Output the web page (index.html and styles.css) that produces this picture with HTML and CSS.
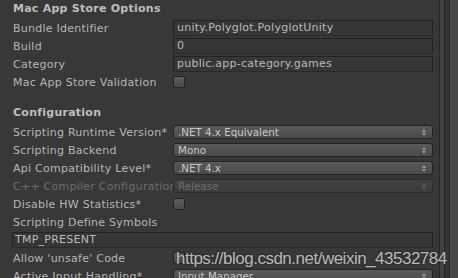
FILE: index.html
```html
<!DOCTYPE html>
<html lang="en">
<head>
  <meta charset="UTF-8">
  <title>Player Settings</title>
  <link rel="stylesheet" href="styles.css">
</head>
<body>
  <div class="inspector">
    <div class="content">
      <div class="section-title">Mac App Store Options</div>
      <div class="row">
        <label class="label">Bundle Identifier</label>
        <div class="field">unity.Polyglot.PolyglotUnity</div>
      </div>
      <div class="row">
        <label class="label">Build</label>
        <div class="field">0</div>
      </div>
      <div class="row">
        <label class="label">Category</label>
        <div class="field">public.app-category.games</div>
      </div>
      <div class="row">
        <label class="label">Mac App Store Validation</label>
        <div class="toggle"></div>
      </div>

      <div class="section-title section-gap">Configuration</div>
      <div class="row">
        <label class="label">Scripting Runtime Version*</label>
        <div class="popup">.NET 4.x Equivalent<span class="arrows"></span></div>
      </div>
      <div class="row">
        <label class="label">Scripting Backend</label>
        <div class="popup">Mono<span class="arrows"></span></div>
      </div>
      <div class="row">
        <label class="label">Api Compatibility Level*</label>
        <div class="popup">.NET 4.x<span class="arrows"></span></div>
      </div>
      <div class="row disabled">
        <label class="label">C++ Compiler Configuration</label>
        <div class="popup">Release<span class="arrows"></span></div>
      </div>
      <div class="row">
        <label class="label">Disable HW Statistics*</label>
        <div class="toggle"></div>
      </div>
      <div class="row">
        <label class="label">Scripting Define Symbols</label>
      </div>
      <div class="row">
        <div class="field wide">TMP_PRESENT</div>
      </div>
      <div class="row">
        <label class="label">Allow 'unsafe' Code</label>
        <div class="toggle"></div>
      </div>
      <div class="row">
        <label class="label">Active Input Handling*</label>
        <div class="popup">Input Manager<span class="arrows"></span></div>
      </div>
    </div>
    <div class="scrollbar">
      <div class="track-a"></div>
      <div class="track-b"></div>
      <div class="track-c"></div>
    </div>
  </div>
  <div class="watermark">https://blog.csdn.net/weixin_43532784</div>
</body>
</html>
```

FILE: styles.css
```css
body {
  margin: 0;
  background-color: #383838;
  font-family: "DejaVu Sans", Verdana, sans-serif;
  font-size: 11px;
  letter-spacing: 0.25px;
  color: #b6b6b6;
  overflow: hidden;
}
.inspector {
  display: flex;
  height: 278px;
}
.content {
  flex: 1;
  padding: 0 6px 0 13px;
}
.section-title {
  height: 17px;
  line-height: 17px;
  font-weight: bold;
  color: #bebebe;
  margin-bottom: 2px;
}
.section-gap {
  margin-top: 13px;
  margin-bottom: 2px;
}
.row {
  display: flex;
  align-items: center;
  height: 18px;
}
.label {
  width: 160px;
  flex-shrink: 0;
  white-space: nowrap;
  overflow: hidden;
}
.field {
  flex: 1;
  height: 14px;
  line-height: 14px;
  padding: 0 3px;
  background-color: #363636;
  border: 1px solid #222222;
  border-bottom-color: #2a2a2a;
  color: #bababa;
  white-space: nowrap;
}
.field.wide {
  margin-left: -1px;
  padding-left: 2px;
}
.toggle {
  width: 10px;
  height: 10px;
  border: 1px solid #232323;
  border-radius: 2px;
  background: linear-gradient(#5c5c5c, #4a4a4a);
}
.popup {
  flex: 1;
  position: relative;
  height: 12px;
  line-height: 12px;
  padding: 0 4px;
  border: 1px solid #232323;
  border-radius: 3px;
  background: linear-gradient(#5a5a5a, #4a4a4a);
  color: #c8c8c8;
  font-size: 10.3px;
  letter-spacing: 0;
}
.arrows {
  position: absolute;
  right: 6px;
  top: 3px;
  width: 0;
  height: 0;
  border-left: 2px solid transparent;
  border-right: 2px solid transparent;
  border-bottom: 3px solid #9a9a9a;
}
.arrows::after {
  content: "";
  position: absolute;
  left: -2px;
  top: 4px;
  border-left: 2px solid transparent;
  border-right: 2px solid transparent;
  border-top: 3px solid #9a9a9a;
}
.disabled .label {
  color: #6e6e6e;
}
.disabled .popup {
  color: #6e6e6e;
  background: linear-gradient(#424242, #3c3c3c);
  border-color: #2c2c2c;
}
.disabled .arrows,
.disabled .arrows::after {
  border-bottom-color: #5e5e5e;
  border-top-color: #5e5e5e;
}
.scrollbar {
  width: 18px;
  display: flex;
  border-left: 1px solid #262626;
}
.track-a {
  width: 4px;
  background-color: #414141;
  border-right: 1px solid #262626;
}
.track-b {
  width: 4px;
  background-color: #353535;
  border-right: 1px solid #262626;
}
.track-c {
  flex: 1;
  background-color: #464646;
}
.watermark {
  position: absolute;
  left: 176px;
  top: 249px;
  font-family: "Liberation Sans", Arial, sans-serif;
  font-size: 17px;
  letter-spacing: -0.5px;
  color: rgba(225, 225, 225, 0.8);
  text-shadow: 0 0 2px rgba(0, 0, 0, 0.6);
  white-space: nowrap;
}
```
